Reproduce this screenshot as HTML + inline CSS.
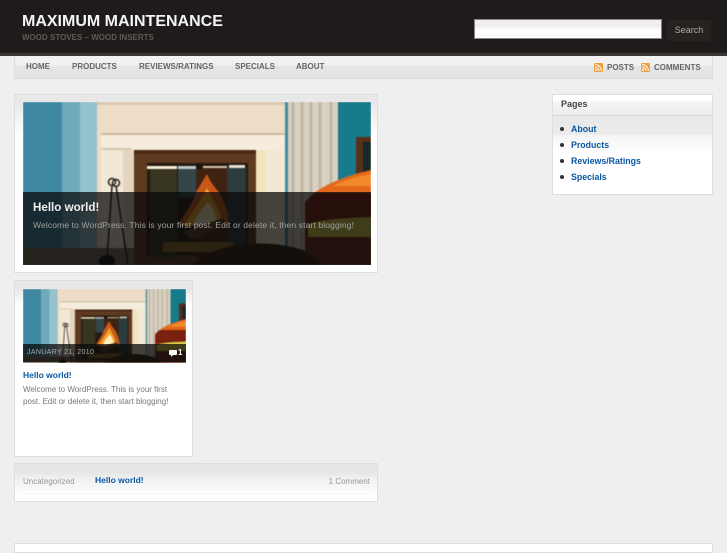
<!DOCTYPE html>
<html><head><meta charset="utf-8"><style>
*{box-sizing:border-box}
html,body{margin:0;padding:0;width:727px;height:545px;overflow:hidden;background:#efefef;font-family:"Liberation Sans",sans-serif}
.a{position:absolute;white-space:nowrap}
a{color:#0b57a4;text-decoration:none;font-weight:bold}
.nav{font-size:8px;font-weight:bold;color:#666;top:62px;line-height:10px}
.img{filter:blur(.6px);overflow:hidden}
</style></head><body>
<svg width="0" height="0" style="position:absolute"><defs>
<g id="fp">
<rect width="348" height="163" fill="#efdcc6"/>
<rect width="39" height="163" fill="#3f88a2"/>
<rect x="39" width="18" height="163" fill="#6faaba"/>
<rect x="57" width="17" height="163" fill="#93c1cd"/>
<rect x="74" width="191" height="31" fill="#efdcc6"/>
<rect x="74" width="191" height="3" fill="#dcc7ad"/>
<rect x="78" y="31" width="187" height="17" fill="#f6ecdd"/>
<rect x="78" y="31" width="187" height="2" fill="#cbb9a0"/>
<rect x="78" y="48" width="184" height="115" fill="#f3e8d6"/>
<rect x="78" y="46" width="30" height="2" fill="#d6c6ae"/>
<rect x="100" y="48" width="11" height="115" fill="#e4d6be"/>
<rect x="233" y="48" width="10" height="115" fill="#efe4bc"/>
<rect x="111" y="48" width="122" height="115" fill="#5e3a20"/>
<rect x="111" y="48" width="122" height="4" fill="#4a2814"/>
<rect x="124" y="61" width="101" height="92" fill="#241a10"/>
<rect x="127" y="66" width="27" height="90" fill="#37341f"/>
<rect x="155" y="66" width="18" height="30" fill="#35464a"/>
<rect x="173" y="66" width="31" height="90" fill="#3e2410"/>
<rect x="204" y="66" width="19" height="86" fill="#2c3c3c"/>
<rect x="124" y="64" width="30" height="3" fill="#f6efd6"/>
<rect x="155" y="64" width="18" height="3" fill="#c0c8c8"/>
<rect x="180" y="64" width="24" height="2" fill="#d8c8a8"/>
<rect x="206" y="63" width="16" height="3" fill="#e4e2d8"/>
<rect x="173" y="61" width="6" height="6" fill="#1a1410"/>
<path d="M155 124 C162 110 170 102 173 90 C177 84 180 78 184 72 C188 82 193 86 197 92 C203 102 206 114 206 124 Z" fill="#c8581a"/>
<path d="M160 124 C168 112 176 102 184 86 C190 98 197 108 200 124 Z" fill="#f4a22a"/>
<path d="M170 124 C174 112 180 106 185 100 C190 106 194 114 194 124 Z" fill="#fff0c0"/>
<path d="M160 130 L200 116 L204 122 L170 138 Z" fill="#5d3a20"/>
<rect x="140" y="140" width="70" height="10" fill="#8a6a2a"/>
<rect x="262" width="3" height="163" fill="#3f8da0"/>
<rect x="265" width="50" height="163" fill="#d8d0c0"/>
<path d="M270 0V163M279 0V163M288 0V163M297 0V163M308 0V163" stroke="#c0b6a4" stroke-width="3"/>
<rect x="315" width="33" height="163" fill="#177b8c"/>
<rect x="333" y="35" width="15" height="37" fill="#5a2e18"/>
<rect x="340" y="40" width="8" height="32" fill="#16282a"/>
<path d="M282 100 C295 84 325 74 348 68 L348 163 L282 163 Z" fill="#7a2010"/>
<path d="M290 92 C305 80 330 72 348 68 V91 H288Z" fill="#e4681c"/>
<path d="M310 84 C322 78 335 74 348 72 V84 Z" fill="#f28a2c"/>
<path d="M285 122 C305 116 330 116 348 115 V135 H285Z" fill="#d8ce46"/>
<rect x="285" y="135" width="63" height="28" fill="#6a2a18"/>
<path d="M170 163 C190 140 250 135 285 150 L300 163Z" fill="#33200e"/>
<rect x="0" y="146" width="111" height="17" fill="#7a6a56"/>
<circle cx="89" cy="80" r="3.5" fill="none" stroke="#222" stroke-width="1.5"/>
<circle cx="93" cy="81" r="3.5" fill="none" stroke="#222" stroke-width="1.5"/>
<path d="M89 84 L84 156 M93 84 L105 163" stroke="#1b1b1b" stroke-width="1.5"/>
<ellipse cx="84" cy="160" rx="8" ry="7" fill="#111"/>
</g>
</defs></svg>

<div class="a" style="left:0;top:0;width:727px;height:53px;background:#1e1b1a"></div>
<div class="a" style="left:0;top:53px;width:727px;height:3px;background:#3b3734"></div>
<div class="a" style="left:22px;top:12px;font-size:16px;line-height:20px;font-weight:bold;color:#f4f4f4">MAXIMUM MAINTENANCE</div>
<div class="a" style="left:22px;top:33px;font-size:8px;line-height:10px;font-weight:bold;color:#5f5b58">WOOD STOVES – WOOD INSERTS</div>
<div class="a" style="left:474px;top:19px;width:188px;height:20px;background:linear-gradient(#eee 0,#eee 6px,#fff 10px);border:1px solid #8a8580"></div>
<div class="a" style="left:667px;top:20px;width:44px;height:21px;background:#252220;color:#aaa;font-size:9px;line-height:20px;text-align:center">Search</div>

<div class="a" style="left:14px;top:56px;width:699px;height:23px;background:linear-gradient(#f1f1f1,#f1f1f1 40%,#e4e4e4 50%,#e4e4e4);border:1px solid #dcdcdc;border-top:0"></div>
<div class="a nav" style="left:26px">HOME</div>
<div class="a nav" style="left:72px">PRODUCTS</div>
<div class="a nav" style="left:139px">REVIEWS/RATINGS</div>
<div class="a nav" style="left:235px">SPECIALS</div>
<div class="a nav" style="left:296px">ABOUT</div>
<svg class="a" style="left:594px;top:63px" width="9" height="9" viewBox="0 0 9 9"><rect width="9" height="9" rx="1" fill="#f0a040"/><circle cx="2" cy="7" r="1" fill="#fff"/><path d="M1 4a4 4 0 0 1 4 4M1 1.6A6.5 6.5 0 0 1 7.4 8" fill="none" stroke="#fff" stroke-width="1"/></svg>
<div class="a nav" style="left:607px;top:63px">POSTS</div>
<svg class="a" style="left:641px;top:63px" width="9" height="9" viewBox="0 0 9 9"><rect width="9" height="9" rx="1" fill="#f0a040"/><circle cx="2" cy="7" r="1" fill="#fff"/><path d="M1 4a4 4 0 0 1 4 4M1 1.6A6.5 6.5 0 0 1 7.4 8" fill="none" stroke="#fff" stroke-width="1"/></svg>
<div class="a nav" style="left:654px;top:63px">COMMENTS</div>

<div class="a" style="left:14px;top:94px;width:364px;height:179px;background:linear-gradient(#e8e8e8,#e8e8e8 8px,#fff 40px);border:1px solid #dedede"></div>
<div class="a" style="left:23px;top:102px;width:348px;height:163px;overflow:hidden"><svg class="img" style="display:block" width="348" height="163" viewBox="0 0 348 163"><use href="#fp"/></svg></div>
<div class="a" style="left:23px;top:192px;width:348px;height:73px;background:rgba(10,10,10,.74)"></div>
<div class="a" style="left:33px;top:200px;font-size:11.6px;line-height:15px;font-weight:bold;color:#eee">Hello world!</div>
<div class="a" style="left:33px;top:219px;font-size:8.5px;line-height:12px;color:#a0a0a0;letter-spacing:.13px">Welcome to WordPress. This is your first post. Edit or delete it, then start blogging!</div>

<div class="a" style="left:14px;top:280px;width:179px;height:177px;background:linear-gradient(#e8e8e8,#e8e8e8 8px,#fff 24px);border:1px solid #dedede"></div>
<div class="a" style="left:23px;top:289px;width:163px;height:74px;overflow:hidden"><svg class="img" style="display:block" width="163" height="74" viewBox="0 5 348 155" preserveAspectRatio="none"><use href="#fp"/></svg></div>
<div class="a" style="left:23px;top:344px;width:163px;height:18px;background:rgba(10,10,10,.75)"></div>
<div class="a" style="left:27px;top:348px;font-size:7px;line-height:10px;color:#aaa;letter-spacing:.35px">JANUARY 21, 2010</div>
<svg class="a" style="left:169px;top:350px" width="8" height="8" viewBox="0 0 8 8"><path d="M1 0h6a1 1 0 0 1 1 1v3a1 1 0 0 1-1 1H4L2 7V5H1a1 1 0 0 1-1-1V1a1 1 0 0 1 1-1z" fill="#fff"/></svg>
<div class="a" style="left:178px;top:348px;font-size:8px;line-height:10px;font-weight:bold;color:#fff">1</div>
<div class="a" style="left:23px;top:369px;font-size:8.5px;line-height:12px"><a>Hello world!</a></div>
<div class="a" style="left:23px;top:384px;font-size:8px;line-height:12px;color:#777">Welcome to WordPress. This is your first<br>post. Edit or delete it, then start blogging!</div>

<div class="a" style="left:14px;top:463px;width:364px;height:39px;background:linear-gradient(#e5e5e5,#e5e5e5 8px,#f0f0f0 14px,#f6f7f8 24px,#fff 30px);border:1px solid #dedede"></div>
<div class="a" style="left:23px;top:476px;font-size:8px;line-height:12px;color:#999">Uncategorized</div>
<div class="a" style="left:95px;top:474px;font-size:8.5px;line-height:12px"><a>Hello world!</a></div>
<div class="a" style="right:357px;top:476px;font-size:8px;line-height:12px;color:#999">1 Comment</div>
<div class="a" style="left:23px;top:493px;width:347px;height:1px;background:#f1f1f1"></div>

<div class="a" style="left:552px;top:94px;width:161px;height:101px;background:#fff;border:1px solid #dedede"></div>
<div class="a" style="left:553px;top:95px;width:159px;height:20px;background:linear-gradient(#fff,#fff 4px,#f4f4f6 8px,#eee)"></div>
<div class="a" style="left:553px;top:115px;width:159px;height:1px;background:#d8d8d8"></div>
<div class="a" style="left:553px;top:116px;width:159px;height:37px;background:linear-gradient(#e8e8e8,#ebebeb 18px,#f4f5f6 20px,#fff)"></div>
<div class="a" style="left:561px;top:99px;font-size:9px;line-height:11px;font-weight:bold;color:#444">Pages</div>
<div class="a" style="left:560px;top:127px;width:4px;height:4px;border-radius:2px;background:#333"></div>
<div class="a" style="left:560px;top:143px;width:4px;height:4px;border-radius:2px;background:#333"></div>
<div class="a" style="left:560px;top:159px;width:4px;height:4px;border-radius:2px;background:#333"></div>
<div class="a" style="left:560px;top:175px;width:4px;height:4px;border-radius:2px;background:#333"></div>
<div class="a" style="left:571px;top:123px;font-size:8.8px;line-height:12px"><a>About</a></div>
<div class="a" style="left:571px;top:139px;font-size:8.8px;line-height:12px"><a>Products</a></div>
<div class="a" style="left:571px;top:155px;font-size:8.8px;line-height:12px"><a>Reviews/Ratings</a></div>
<div class="a" style="left:571px;top:171px;font-size:8.8px;line-height:12px"><a>Specials</a></div>

<div class="a" style="left:14px;top:543px;width:699px;height:10px;background:#fff;border:1px solid #dedede"></div>
</body></html>
